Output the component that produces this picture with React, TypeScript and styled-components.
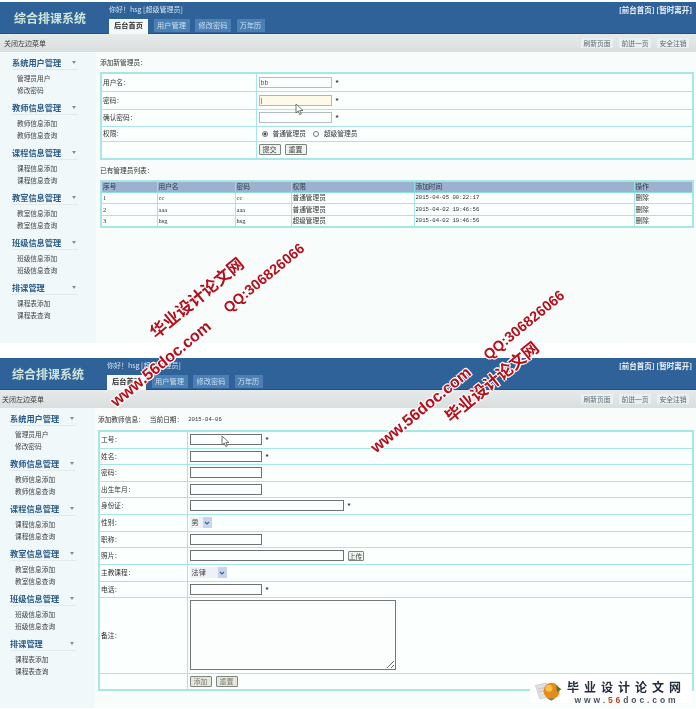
import React from 'react';
import styled, { createGlobalStyle } from 'styled-components';

const GlobalStyle = createGlobalStyle`
  html, body {
    margin: 0;
    padding: 0;
    background: #fff;
  }
  * {
    box-sizing: border-box;
  }
`;

const Page = styled.div`
  position: relative;
  width: 696px;
  height: 709px;
  overflow: hidden;
  padding-top: 2px;
  background: #fff;
  color: #333;
  font-family: "Noto Sans CJK SC", "Liberation Sans", sans-serif;
  font-size: 6.7px;
  filter: blur(0.3px);
`;

const Panel = styled.section<{ $gap?: number }>`
  margin-top: ${(p) => p.$gap || 0}px;
`;

const Header = styled.header`
  display: flex;
  height: 32px;
  background: #2f6299;
  border-bottom: 1px solid #27507c;
`;

const Brand = styled.div<{ $inset: number }>`
  width: 95px;
  margin-left: ${(p) => p.$inset}px;
  padding-top: 7px;
  color: #cfe6dc;
  font-size: 12px;
  line-height: 17px;
  font-weight: 700;
  white-space: nowrap;
`;

const HeaderMiddle = styled.div`
  flex: 1;
  display: flex;
  flex-direction: column;
  justify-content: space-between;
`;

const Greeting = styled.div`
  padding-top: 2px;
  color: #d5e2ee;
  font-size: 7px;
  line-height: 11px;
`;

const Tabs = styled.nav`
  display: flex;
  gap: 5.5px;
`;

const Tab = styled.div<{ $active?: boolean; $w: number }>`
  width: ${(p) => p.$w}px;
  height: ${(p) => (p.$active ? 15 : 13)}px;
  margin-bottom: ${(p) => (p.$active ? -1 : 0)}px;
  background: ${(p) => (p.$active ? '#f6f9f9' : '#4a80b4')};
  color: ${(p) => (p.$active ? '#2a2a2a' : '#cfdfee')};
  font-size: 7.2px;
  font-weight: ${(p) => (p.$active ? 700 : 400)};
  line-height: 13px;
  text-align: center;
`;

const HeaderLinks = styled.div`
  padding: 2px 4px 0 0;
  color: #eef3f8;
  font-size: 7.5px;
  line-height: 11px;
  font-weight: 700;
  white-space: nowrap;
`;

const SubBar = styled.div`
  display: flex;
  align-items: center;
  justify-content: space-between;
  height: 18px;
  padding: 0 7px 0 4px;
  background: linear-gradient(#e6eaeb, #d9dedf);
  color: #3c3c3c;
  font-size: 7px;
`;

const SubBarLabel = styled.span<{ $inset: number }>`
  margin-left: ${(p) => p.$inset}px;
`;

const SubActions = styled.div`
  display: flex;
  gap: 6px;
`;

const SubButton = styled.div`
  width: 32px;
  height: 10px;
  background: #eaeff1;
  color: #5a6a72;
  font-size: 6.8px;
  line-height: 10px;
  text-align: center;
`;

const Body = styled.div<{ $h: number }>`
  display: flex;
  height: ${(p) => p.$h}px;
  background: #f8fdfc;
`;

const Sidebar = styled.aside<{ $w: number; $inset: number }>`
  flex: none;
  width: ${(p) => p.$w}px;
  padding: 2px 0 0 ${(p) => p.$inset}px;
  background: #f0f8fa;
`;

const MenuGroup = styled.div`
  height: 45px;
`;

const MenuTitle = styled.div`
  display: flex;
  justify-content: space-between;
  align-items: center;
  width: 66px;
  height: 16px;
  border-bottom: 1px solid #e2e9ea;
  color: #2b5c88;
  font-size: 8.2px;
  font-weight: 700;
  white-space: nowrap;
`;

const MenuArrow = styled.span`
  width: 0;
  height: 0;
  margin: 2px 2px 0 0;
  border-left: 2.5px solid transparent;
  border-right: 2.5px solid transparent;
  border-top: 3px solid #7f8f98;
`;

const MenuList = styled.div`
  margin-top: 2px;
  padding-left: 5px;
`;

const MenuItem = styled.div`
  height: 12px;
  color: #444;
  line-height: 12px;
`;

const Main = styled.main<{ $inset: number }>`
  flex: 1;
  padding: 0 2px 0 ${(p) => p.$inset}px;
`;

const Caption = styled.div<{ $h: number }>`
  display: flex;
  align-items: center;
  gap: 5px;
  height: ${(p) => p.$h}px;
  color: #333;
`;

const CaptionDate = styled.span`
  font-family: "Liberation Mono", monospace;
  font-size: 5.6px;
`;

const GridTable = styled.table`
  width: 100%;
  table-layout: fixed;
  border-collapse: collapse;
  border: 2px solid #a8e6e6;
  background: #fbfffe;
`;

const Row = styled.tr<{ $h: number }>`
  height: ${(p) => p.$h}px;
`;

const Cell = styled.td`
  padding: 0 0 0 1px;
  border: 1px solid #a8e6e6;
  color: #333;
  line-height: 9px;
  white-space: nowrap;
`;

const HeadCell = styled.th`
  padding: 0 0 0 1px;
  border: 1px solid #8fdcdc;
  background: #9cb1d0;
  color: #2f3a48;
  font-weight: 400;
  line-height: 9px;
  text-align: left;
`;

const DataCell = styled(Cell)`
  font-family: "Liberation Serif", "Noto Sans CJK SC", serif;
  font-size: 6.5px;
`;

const TimeCell = styled(Cell)`
  font-family: "Liberation Mono", monospace;
  font-size: 5.6px;
`;

const FieldLine = styled.div`
  display: flex;
  align-items: center;
  gap: 4px;
  padding-left: 1px;
`;

const TextBox = styled.input<{ $w: number; $tone?: 'soft' | 'focus' }>`
  width: ${(p) => p.$w}px;
  height: 11px;
  margin: 0;
  padding: 0 1px;
  border: 1px solid
    ${(p) => (p.$tone === 'focus' ? '#c9b67f' : p.$tone === 'soft' ? '#b4bcbc' : '#6f7272')};
  border-radius: 0;
  outline: none;
  background: ${(p) => (p.$tone === 'focus' ? '#fdfbe8' : '#fdfefe')};
  color: #555;
  font-family: "Liberation Sans", sans-serif;
  font-size: 7px;
`;

const Required = styled.span`
  color: #333;
  font-family: "Liberation Sans", sans-serif;
  font-size: 8px;
  font-weight: 700;
`;

const RadioDot = styled.input`
  appearance: none;
  width: 6px;
  height: 6px;
  margin: 0 5px 0 0;
  border: 1px solid #777;
  border-radius: 50%;
  background: #fff;
  &:checked {
    background: radial-gradient(circle, #555 0 1.2px, #fff 1.8px);
  }
`;

const RadioLabel = styled.label`
  display: inline-flex;
  align-items: center;
  margin-right: 7px;
`;

const RadioLine = styled(FieldLine)`
  gap: 0;
  padding-left: 4px;
`;

const PlainButton = styled.button<{ $muted?: boolean }>`
  width: 22px;
  height: 11px;
  margin: 0;
  padding: 0;
  border: 1px solid #7d8580;
  border-radius: 1px;
  background: ${(p) => (p.$muted ? '#e6e6dc' : '#f0f2ee')};
  color: ${(p) => (p.$muted ? '#7d7d70' : '#444')};
  font-family: inherit;
  font-size: 7px;
  line-height: 9px;
`;

const UploadButton = styled(PlainButton)`
  width: 16px;
  height: 10px;
  font-size: 6.5px;
`;

const SelectBox = styled.div<{ $w: number }>`
  display: flex;
  align-items: center;
  justify-content: space-between;
  width: ${(p) => p.$w}px;
  height: 11px;
  padding-left: 2px;
  background: #eef2f8;
  color: #444;
  font-size: 7.2px;
`;

const SelectArrow = styled.span`
  display: flex;
  align-items: center;
  justify-content: center;
  width: 9px;
  height: 100%;
  background: #c8d4ec;
  color: #3f5f9f;
`;

const NoteBox = styled.textarea`
  display: block;
  width: 206px;
  height: 70px;
  margin: 0;
  border: 1px solid #777;
  border-radius: 0;
  outline: none;
  background: #fcfefe;
`;

const Cursor = styled.svg<{ $x: number; $y: number }>`
  position: absolute;
  left: ${(p) => p.$x}px;
  top: ${(p) => p.$y}px;
  width: 9px;
  height: 13px;
`;

const Watermark = styled.div<{ $x: number; $y: number; $size: number }>`
  position: absolute;
  left: ${(p) => p.$x}px;
  top: ${(p) => p.$y}px;
  transform: translate(-50%, -50%) rotate(-39.5deg);
  color: #b4101c;
  font-family: "Liberation Sans", "Noto Sans CJK SC", sans-serif;
  font-size: ${(p) => p.$size}px;
  font-weight: 700;
  line-height: 1;
  white-space: nowrap;
  text-shadow: 1px 1px 0 #fff, -1px -1px 0 #fff, 1px -1px 0 #fff, -1px 1px 0 #fff;
`;

const LogoBadge = styled.div`
  position: absolute;
  left: 530px;
  top: 678px;
  display: flex;
  align-items: flex-start;
  width: 162px;
  height: 25px;
  background: #fff;
`;

const LogoText = styled.div`
  margin: 2px 0 0 1px;
  text-align: center;
`;

const LogoName = styled.div`
  color: #222c3c;
  font-size: 12px;
  font-weight: 700;
  line-height: 14px;
  letter-spacing: 5px;
  white-space: nowrap;
`;

const LogoUrl = styled.div`
  margin-top: 2px;
  color: #4a5560;
  font-family: "Liberation Sans", sans-serif;
  font-size: 8.5px;
  font-weight: 700;
  line-height: 8px;
  letter-spacing: 2.9px;
  white-space: nowrap;
`;

const LogoAccent = styled.span`
  color: #b5451a;
`;

const menus = [
  ['系统用户管理', '管理员用户', '修改密码'],
  ['教师信息管理', '教师信息添加', '教师信息查询'],
  ['课程信息管理', '课程信息添加', '课程信息查询'],
  ['教室信息管理', '教室信息添加', '教室信息查询'],
  ['班级信息管理', '班级信息添加', '班级信息查询'],
  ['排课管理', '课程表添加', '课程表查询'],
];

const admins = [
  ['1', 'cc', 'cc', '普通管理员', '2015-04-05 00:22:17'],
  ['2', 'aaa', 'aaa', '普通管理员', '2015-04-02 19:46:56'],
  ['3', 'hsg', 'hsg', '超级管理员', '2015-04-02 19:46:56'],
];

const PointerIcon: React.FC<{ x: number; y: number }> = ({ x, y }) => (
  <Cursor $x={x} $y={y} viewBox="0 0 9 13">
    <path d="M1 1v9l2.2-2 1.6 3.6 1.5-.7-1.6-3.4H8z" fill="#fff" stroke="#555" strokeWidth="0.8" />
  </Cursor>
);

const ChevronIcon: React.FC = () => (
  <SelectArrow>
    <svg width="6" height="4" viewBox="0 0 6 4">
      <path d="M1 1l2 2 2-2" fill="none" stroke="currentColor" strokeWidth="1.2" />
    </svg>
  </SelectArrow>
);

const TopBar: React.FC<{ inset: number }> = ({ inset }) => (
  <>
    <Header>
      <Brand $inset={inset}>综合排课系统</Brand>
      <HeaderMiddle>
        <Greeting>你好！hsg [超级管理员]</Greeting>
        <Tabs>
          <Tab $active $w={39}>后台首页</Tab>
          <Tab $w={36}>用户管理</Tab>
          <Tab $w={36}>修改密码</Tab>
          <Tab $w={28}>万年历</Tab>
        </Tabs>
      </HeaderMiddle>
      <HeaderLinks>[前台首页] [暂时离开]</HeaderLinks>
    </Header>
    <SubBar>
      <SubBarLabel $inset={inset - 14}>关闭左边菜单</SubBarLabel>
      <SubActions>
        <SubButton>刷新页面</SubButton>
        <SubButton>前进一页</SubButton>
        <SubButton>安全注销</SubButton>
      </SubActions>
    </SubBar>
  </>
);

const SideMenu: React.FC<{ w: number; inset: number }> = ({ w, inset }) => (
  <Sidebar $w={w} $inset={inset}>
    {menus.map(([title, ...items]) => (
      <MenuGroup key={title}>
        <MenuTitle>
          {title}
          <MenuArrow />
        </MenuTitle>
        <MenuList>
          {items.map((item) => (
            <MenuItem key={item}>{item}</MenuItem>
          ))}
        </MenuList>
      </MenuGroup>
    ))}
  </Sidebar>
);

const AdminPanel: React.FC = () => (
  <Panel>
    <TopBar inset={14} />
    <Body $h={291}>
      <SideMenu w={96} inset={12} />
      <Main $inset={4}>
        <Caption $h={20}>添加新管理员：</Caption>
        <GridTable>
          <colgroup>
            <col width="155" />
            <col />
          </colgroup>
          <tbody>
            <Row $h={18}>
              <Cell>用户名：</Cell>
              <Cell>
                <FieldLine>
                  <TextBox $w={73} $tone="soft" defaultValue="bb" />
                  <Required>*</Required>
                </FieldLine>
              </Cell>
            </Row>
            <Row $h={18}>
              <Cell>密码：</Cell>
              <Cell>
                <FieldLine>
                  <TextBox $w={73} $tone="focus" defaultValue="|" />
                  <Required>*</Required>
                </FieldLine>
              </Cell>
            </Row>
            <Row $h={17}>
              <Cell>确认密码：</Cell>
              <Cell>
                <FieldLine>
                  <TextBox $w={73} $tone="soft" />
                  <Required>*</Required>
                </FieldLine>
              </Cell>
            </Row>
            <Row $h={15}>
              <Cell>权限:</Cell>
              <Cell>
                <RadioLine>
                  <RadioLabel>
                    <RadioDot type="radio" name="role" defaultChecked />
                    普通管理员
                  </RadioLabel>
                  <RadioLabel>
                    <RadioDot type="radio" name="role" />
                    超级管理员
                  </RadioLabel>
                </RadioLine>
              </Cell>
            </Row>
            <Row $h={18}>
              <Cell />
              <Cell>
                <FieldLine>
                  <PlainButton>提交</PlainButton>
                  <PlainButton>重置</PlainButton>
                </FieldLine>
              </Cell>
            </Row>
          </tbody>
        </GridTable>
        <Caption $h={20}>已有管理员列表：</Caption>
        <GridTable>
          <colgroup>
            <col width="56" />
            <col width="78" />
            <col width="56" />
            <col width="123" />
            <col width="220" />
            <col />
          </colgroup>
          <thead>
            <Row $h={11}>
              <HeadCell>序号</HeadCell>
              <HeadCell>用户名</HeadCell>
              <HeadCell>密码</HeadCell>
              <HeadCell>权限</HeadCell>
              <HeadCell>添加时间</HeadCell>
              <HeadCell>操作</HeadCell>
            </Row>
          </thead>
          <tbody>
            {admins.map(([id, name, pass, role, time]) => (
              <Row $h={11.5} key={id}>
                <DataCell>{id}</DataCell>
                <DataCell>{name}</DataCell>
                <DataCell>{pass}</DataCell>
                <Cell>{role}</Cell>
                <TimeCell>{time}</TimeCell>
                <Cell>删除</Cell>
              </Row>
            ))}
          </tbody>
        </GridTable>
      </Main>
    </Body>
  </Panel>
);

const Field: React.FC<{ h: number; label: string; children?: React.ReactNode }> = ({
  h,
  label,
  children,
}) => (
  <Row $h={h}>
    <Cell>{label}</Cell>
    <Cell>
      <FieldLine>{children}</FieldLine>
    </Cell>
  </Row>
);

const TeacherPanel: React.FC = () => (
  <Panel $gap={15}>
    <TopBar inset={12} />
    <Body $h={300}>
      <SideMenu w={95} inset={10} />
      <Main $inset={3}>
        <Caption $h={22}>
          <span>添加教师信息：</span>
          <span>当前日期：</span>
          <CaptionDate>2015-04-06</CaptionDate>
        </Caption>
        <GridTable>
          <colgroup>
            <col width="88" />
            <col />
          </colgroup>
          <tbody>
            <Field h={17} label="工号：">
              <TextBox $w={72} />
              <Required>*</Required>
            </Field>
            <Field h={16} label="姓名：">
              <TextBox $w={72} />
              <Required>*</Required>
            </Field>
            <Field h={17} label="密码：">
              <TextBox $w={72} />
            </Field>
            <Field h={16} label="出生年月：">
              <TextBox $w={72} />
            </Field>
            <Field h={17} label="身份证：">
              <TextBox $w={154} />
              <Required>*</Required>
            </Field>
            <Field h={17} label="性别：">
              <SelectBox $w={22}>
                男
                <ChevronIcon />
              </SelectBox>
            </Field>
            <Field h={16} label="职称：">
              <TextBox $w={72} />
            </Field>
            <Field h={17} label="照片：">
              <TextBox $w={154} />
              <UploadButton>上传</UploadButton>
            </Field>
            <Field h={17} label="主教课程：">
              <SelectBox $w={37}>
                法律
                <ChevronIcon />
              </SelectBox>
            </Field>
            <Field h={16} label="电话：">
              <TextBox $w={72} />
              <Required>*</Required>
            </Field>
            <Field h={76} label="备注：">
              <NoteBox />
            </Field>
            <Field h={17} label="">
              <PlainButton $muted>添加</PlainButton>
              <PlainButton $muted>重置</PlainButton>
            </Field>
          </tbody>
        </GridTable>
      </Main>
    </Body>
  </Panel>
);

const App: React.FC = () => (
  <Page>
    <GlobalStyle />
    <AdminPanel />
    <TeacherPanel />

    <PointerIcon x={295} y={103} />
    <PointerIcon x={221} y={435} />

    <Watermark $x={197} $y={298} $size={16.5}>华业设计论文网</Watermark>
    <Watermark $x={264} $y={278} $size={14.5}>QQ:306826066</Watermark>
    <Watermark $x={161} $y={364} $size={16}>www.56doc.com</Watermark>
    <Watermark $x={421} $y={410} $size={16}>www.56doc.com</Watermark>
    <Watermark $x={524} $y={325} $size={14.5}>QQ:306826066</Watermark>
    <Watermark $x={492} $y={382} $size={16.5}>毕业设计论文网</Watermark>

    <LogoBadge>
      <svg width="36" height="25" viewBox="0 0 40 25">
        <path d="M6 7l12-3 5 15-12 3z" fill="#dfe0e2" stroke="#b9bcc0" strokeWidth="0.6" />
        <path d="M9 11l8-2M10 14l8-2" stroke="#c9a5ad" strokeWidth="0.6" />
        <circle cx="24" cy="13" r="9" fill="#e8891c" />
        <circle cx="21" cy="10" r="4" fill="#f6c04a" />
        <path d="M29 7l6 4-5 3z" fill="#4d7a2a" />
        <path d="M18 21l6 3 4-3z" fill="#6f8a3a" />
      </svg>
      <LogoText>
        <LogoName>毕业设计论文网</LogoName>
        <LogoUrl>
          www.<LogoAccent>56</LogoAccent>doc.com
        </LogoUrl>
      </LogoText>
    </LogoBadge>
  </Page>
);

export default App;
